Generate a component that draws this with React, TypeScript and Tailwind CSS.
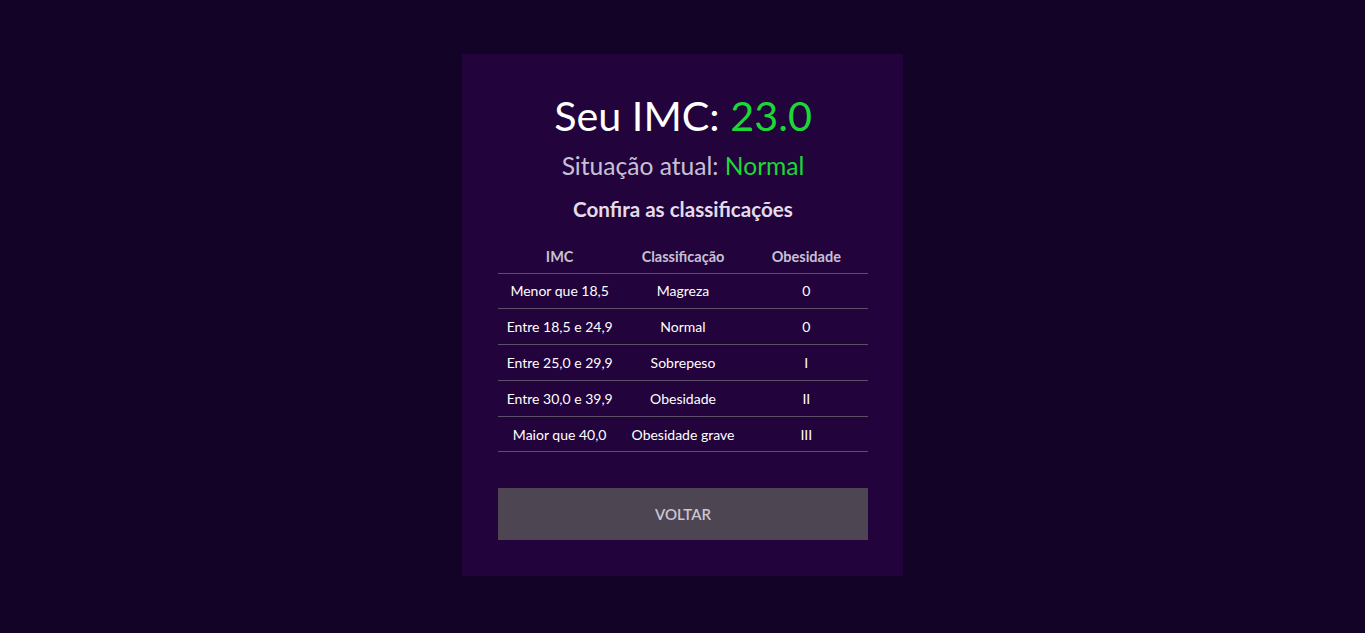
const rows = [
  { imc: 'Menor que 18,5', classe: 'Magreza', grau: '0' },
  { imc: 'Entre 18,5 e 24,9', classe: 'Normal', grau: '0' },
  { imc: 'Entre 25,0 e 29,9', classe: 'Sobrepeso', grau: 'I' },
  { imc: 'Entre 30,0 e 39,9', classe: 'Obesidade', grau: 'II' },
  { imc: 'Maior que 40,0', classe: 'Obesidade grave', grau: 'III' },
];

export default function App() {
  return (
    <div
      className="min-h-screen bg-[#130326] flex justify-center pt-[54px]"
      style={{ fontFamily: 'Lato, "Open Sans", sans-serif' }}
    >
      <div className="w-[441px] h-fit bg-[#22033c] pl-[36px] pr-[35px] pt-[35px] pb-[36px] flex flex-col items-center">
        <h1 className="text-[41.3px] leading-[52px] text-white">
          Seu IMC: <span className="text-[#1bd837]">23.0</span>
        </h1>
        <h2 className="text-[24.6px] leading-[30px] text-[#c8c0d6] mt-[10px]">
          Situação atual: <span className="text-[#1bd837]">Normal</span>
        </h2>
        <h3 className="text-[20.6px] leading-[26px] font-bold text-[#e2dde8] mt-[15px]">
          Confira as classificações
        </h3>
        <table className="w-full mt-[20px] text-[14px] table-fixed border-collapse">
          <thead>
            <tr className="border-b border-[#5c5068]">
              <th className="h-[31px] text-[14.5px] font-bold text-[#c8c0d3] text-center">IMC</th>
              <th className="h-[31px] text-[14.5px] font-bold text-[#c8c0d3] text-center">Classificação</th>
              <th className="h-[31px] text-[14.5px] font-bold text-[#c8c0d3] text-center">Obesidade</th>
            </tr>
          </thead>
          <tbody>
            {rows.map((r) => (
              <tr key={r.imc} className="border-b border-[#5c5068]">
                <td className="h-[35.8px] text-white text-center">{r.imc}</td>
                <td className="h-[35.8px] text-white text-center">{r.classe}</td>
                <td className="h-[35.8px] text-white text-center">{r.grau}</td>
              </tr>
            ))}
          </tbody>
        </table>
        <button className="w-full h-[52px] mt-[36px] bg-[#4d4552] text-[#cbc5d1] text-[15px] font-semibold uppercase">
          Voltar
        </button>
      </div>
    </div>
  );
}
